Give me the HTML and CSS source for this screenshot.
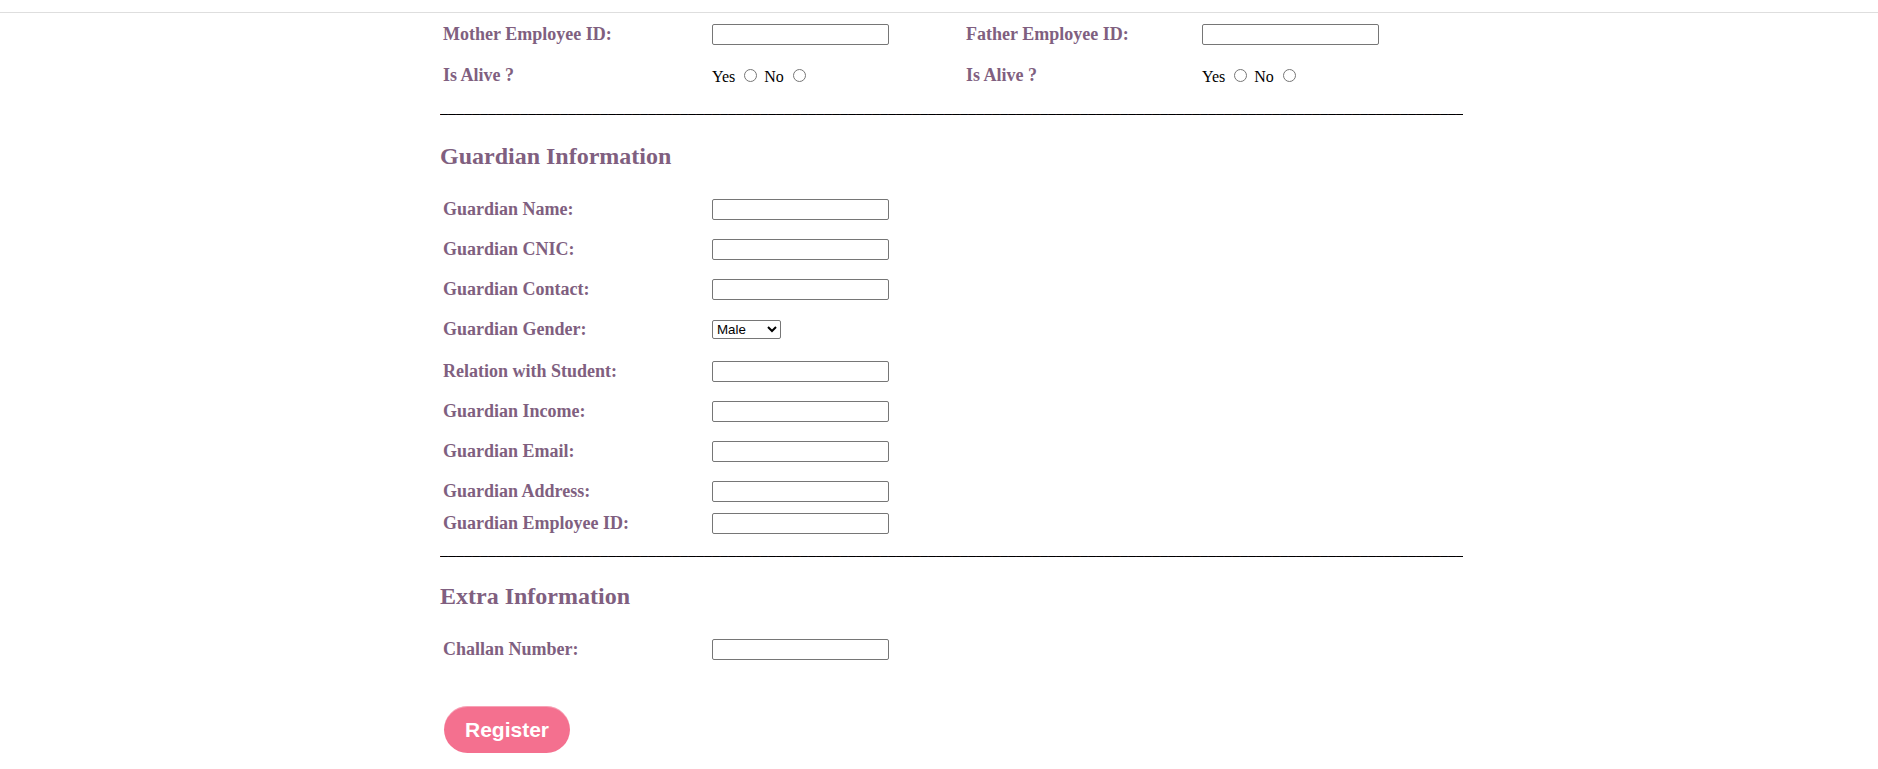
FILE: index.html
```html
<!DOCTYPE html>
<html>
<head>
<meta charset="utf-8">
<title>Registration</title>
<link rel="stylesheet" href="styles.css">
</head>
<body>
<div class="topbar"></div>
<form class="form">
  <div class="row">
    <label class="lbl">Mother Employee ID:</label>
    <div class="fld"><input type="text" class="txt"></div>
    <label class="lbl2">Father Employee ID:</label>
    <div class="fld2"><input type="text" class="txt"></div>
  </div>
  <div class="row">
    <label class="lbl">Is Alive ?</label>
    <div class="fld radios">Yes <input type="radio" name="ma"> No <input type="radio" name="ma"></div>
    <label class="lbl2">Is Alive ?</label>
    <div class="fld2 radios">Yes <input type="radio" name="fa"> No <input type="radio" name="fa"></div>
  </div>
  <div class="sep sep1">________________________________________________________________________________________________________________________________</div>

  <h2 class="heading h-guardian">Guardian Information</h2>
  <div class="row">
    <label class="lbl">Guardian Name:</label>
    <div class="fld"><input type="text" class="txt"></div>
  </div>
  <div class="row">
    <label class="lbl">Guardian CNIC:</label>
    <div class="fld"><input type="text" class="txt"></div>
  </div>
  <div class="row">
    <label class="lbl">Guardian Contact:</label>
    <div class="fld"><input type="text" class="txt"></div>
  </div>
  <div class="row row-select">
    <label class="lbl">Guardian Gender:</label>
    <div class="fld"><select class="sel"><option>Male</option><option>Female</option></select></div>
  </div>
  <div class="row">
    <label class="lbl">Relation with Student:</label>
    <div class="fld"><input type="text" class="txt"></div>
  </div>
  <div class="row">
    <label class="lbl">Guardian Income:</label>
    <div class="fld"><input type="text" class="txt"></div>
  </div>
  <div class="row">
    <label class="lbl">Guardian Email:</label>
    <div class="fld"><input type="text" class="txt"></div>
  </div>
  <div class="row">
    <label class="lbl">Guardian Address:</label>
    <div class="fld"><input type="text" class="txt"></div>
  </div>
  <div class="row row-tight">
    <label class="lbl">Guardian Employee ID:</label>
    <div class="fld"><input type="text" class="txt"></div>
  </div>
  <div class="sep sep2">________________________________________________________________________________________________________________________________</div>

  <h2 class="heading h-extra">Extra Information</h2>
  <div class="row">
    <label class="lbl">Challan Number:</label>
    <div class="fld"><input type="text" class="txt"></div>
  </div>
  <div class="actions">
    <button type="button" class="btn">Register</button>
  </div>
</form>
</body>
</html>
```
FILE: styles.css
```css
html, body {
  margin: 0;
  padding: 0;
  background: #ffffff;
}

body {
  font-family: "Liberation Serif", "Times New Roman", serif;
  font-size: 16px;
  color: #000000;
}

.topbar {
  height: 12px;
  border-bottom: 1px solid #dedede;
}

.form {
  margin: 1px 0 0 440px;
  width: 1023px;
}

.row {
  display: flex;
  align-items: center;
  height: 40px;
}

.form > .row:first-child {
  height: 41px;
}

.row-tight {
  height: 25px;
}

.row-select {
  margin-bottom: 2px;
}

.lbl {
  width: 269px;
  padding-left: 3px;
  font-size: 18px;
  font-weight: bold;
  color: #805f80;
}

.lbl2 {
  width: 236px;
  font-size: 18px;
  font-weight: bold;
  color: #805f80;
}

.fld {
  width: 254px;
  display: flex;
  align-items: center;
}

.fld2 {
  display: flex;
  align-items: center;
}

.radios {
  display: block;
  font-size: 16px;
  white-space: pre;
  padding-top: 1px;
}

.radios input {
  margin: 3px 3px 0 5px;
  width: 13px;
  height: 13px;
}

.txt {
  box-sizing: border-box;
  width: 177px;
  height: 21px;
  margin: 0;
  padding: 1px 2px;
  border: 1px solid #767676;
  border-radius: 2px;
  font-family: "Liberation Sans", Arial, sans-serif;
  font-size: 13.333px;
  background: #ffffff;
}

.sel {
  box-sizing: border-box;
  width: 69px;
  height: 19px;
  margin: 0;
  font-family: "Liberation Sans", Arial, sans-serif;
  font-size: 13.333px;
  color: #000000;
  border: 1px solid #767676;
  border-radius: 2px;
  background: #ffffff;
}

.sep {
  font-size: 16px;
  line-height: 18px;
  white-space: nowrap;
  overflow: hidden;
  color: #000000;
}

.sep1 {
  margin-top: 4px;
}

.sep2 {
  margin-top: 5px;
}

.heading {
  margin: 0;
  font-size: 24px;
  line-height: 28px;
  font-weight: bold;
  color: #805f80;
}

.h-guardian {
  margin-top: 25px;
  margin-bottom: 19px;
}

.h-extra {
  margin-top: 23px;
  margin-bottom: 19px;
}

.actions {
  margin-top: 37px;
  padding-left: 4px;
}

.btn {
  width: 126px;
  height: 47px;
  border: none;
  border-radius: 24px;
  background: #f4708f;
  box-shadow: inset 0 1px 0 rgba(255, 255, 255, 0.35);
  color: #ffffff;
  font-family: "Liberation Sans", Arial, sans-serif;
  font-size: 21px;
  font-weight: bold;
  padding: 0;
  cursor: pointer;
}
```
